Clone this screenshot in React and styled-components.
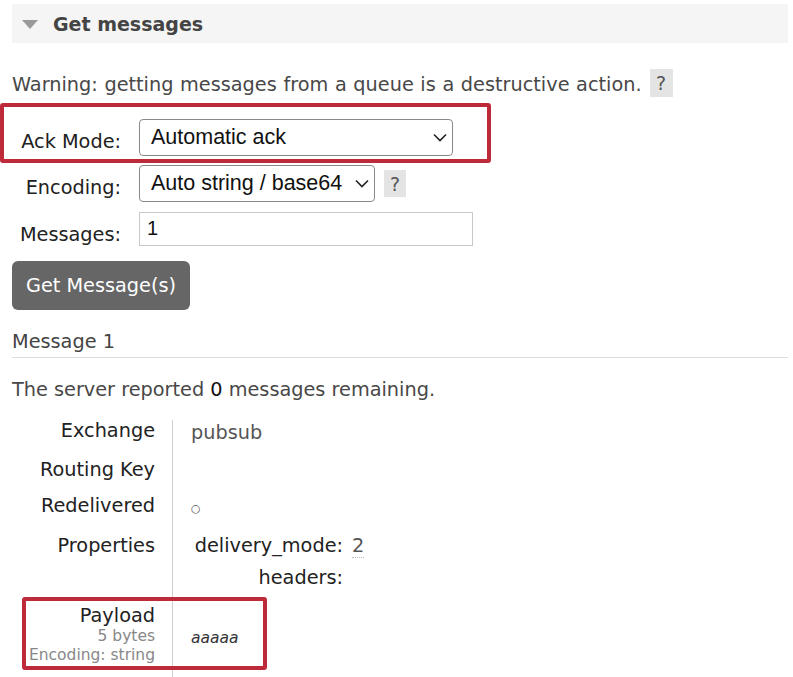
import React from "react";
import styled, { createGlobalStyle } from "styled-components";

const Global = createGlobalStyle`
  html, body { margin: 0; padding: 0; background: #fff; }
  body { font-family: "DejaVu Sans", Verdana, sans-serif; color: #444; }
`;

const Page = styled.div`
  position: relative;
  width: 793px;
  height: 677px;
  overflow: hidden;
  box-sizing: border-box;
  padding: 4px 5px 0 12px;
`;

const SectionHeader = styled.div`
  height: 39px;
  background: #f5f5f5;
  display: flex;
  align-items: center;
  padding-left: 10px;
  gap: 15px;
`;

const Triangle = styled.span`
  width: 0;
  height: 0;
  border-left: 8px solid transparent;
  border-right: 8px solid transparent;
  border-top: 9px solid #9a9a9a;
  margin-top: 1px;
`;

const Title = styled.h2`
  margin: 0;
  font-size: 19px;
  font-weight: bold;
  color: #444;
`;

const Warning = styled.div`
  margin-top: 26px;
  display: flex;
  align-items: center;
  font-size: 19.3px;
  word-spacing: 0.5px;
  color: #484848;
  height: 28px;
`;

const WarningText = styled.span`
  padding-top: 3px;
`;

const Help = styled.span`
  display: inline-flex;
  align-items: center;
  justify-content: center;
  flex: none;
  width: ${(p) => p.$w || 23}px;
  height: ${(p) => p.$h || 28}px;
  margin-left: ${(p) => p.$ml || 8}px;
  margin-top: ${(p) => p.$mt || 0}px;
  background: #e4e4e4;
  color: #555;
  font-size: 19px;
`;

const Form = styled.div`
  margin-top: 22px;
  display: flex;
  flex-direction: column;
`;

const FormRow = styled.div`
  display: flex;
  align-items: flex-start;
  margin-bottom: ${(p) => p.$mb || 0}px;
`;

const FormLabel = styled.label`
  width: 109px;
  text-align: right;
  padding-top: 12px;
  line-height: 22px;
  font-size: 19.3px;
  color: #222;
  margin-right: 18px;
  white-space: nowrap;
`;

const SelectWrap = styled.div`
  position: relative;
  display: inline-block;
`;

const Select = styled.select`
  appearance: none;
  -webkit-appearance: none;
  box-sizing: border-box;
  width: ${(p) => p.$w}px;
  height: 37px;
  border: 1px solid #8a8a8a;
  border-radius: 4px;
  background: #fff;
  padding: 0 0 2px 11px;
  font-family: "Liberation Sans", Arial, sans-serif;
  font-size: 21.5px;
  color: #111;
  outline: none;
`;

const Chevron = styled.svg`
  position: absolute;
  right: 6px;
  top: 14px;
  pointer-events: none;
`;

const Input = styled.input`
  box-sizing: border-box;
  width: 334px;
  height: 34px;
  border: 1px solid #c8c8c8;
  border-radius: 0;
  padding: 0 0 2px 7px;
  font-family: "Liberation Sans", Arial, sans-serif;
  font-size: 20px;
  color: #111;
  outline: none;
`;

const Button = styled.button`
  margin-top: 15px;
  align-self: flex-start;
  width: 178px;
  height: 49px;
  border: none;
  border-radius: 6px;
  background: #666;
  color: #fff;
  font-family: "DejaVu Sans", Verdana, sans-serif;
  font-size: 19.3px;
  padding: 0;
`;

const SubHeading = styled.h3`
  margin: 21px 0 0;
  font-weight: normal;
  font-size: 19.3px;
  line-height: 22px;
  color: #444;
  padding-bottom: 4px;
  border-bottom: 1px solid #ddd;
`;

const Para = styled.p`
  margin: 21px 0 0;
  font-size: 19.3px;
  line-height: 22px;
  color: #484848;
`;

const Strong = styled.span`
  color: #111;
`;

const Table = styled.div`
  margin-top: 19px;
  display: flex;
  flex-direction: column;
`;

const TRow = styled.div`
  display: flex;
  align-items: stretch;
  height: ${(p) => p.$h}px;
  flex: none;
`;

const TLabel = styled.div`
  width: 143px;
  flex: none;
  padding-right: 17px;
  text-align: right;
  font-size: 19.3px;
  line-height: 22px;
  color: #222;
  border-right: 1px solid #cfcfcf;
  white-space: nowrap;
`;

const SubInfo = styled.div`
  font-size: 15.5px;
  line-height: 19px;
  color: #888;
`;

const TValue = styled.div`
  padding-left: ${(p) => p.$pl || 18}px;
  padding-top: ${(p) => p.$pt || 0}px;
  font-size: 19.3px;
  line-height: 22px;
  color: #555;
`;

const Circle = styled.span`
  font-size: 11px;
  color: #555;
`;

const Props = styled.div`
  display: grid;
  grid-template-columns: 149px auto;
  column-gap: 9px;
  row-gap: 10px;
`;

const PropKey = styled.div`
  text-align: right;
  color: #222;
  white-space: nowrap;
`;

const PropVal = styled.div`
  color: #555;
`;

const Abbr = styled.span`
  border-bottom: 1px dotted #bbb;
`;

const Payload = styled.span`
  font-style: italic;
  font-size: 15.5px;
  color: #333;
`;

const Highlight = styled.div`
  position: absolute;
  left: ${(p) => p.$x}px;
  top: ${(p) => p.$y}px;
  width: ${(p) => p.$w}px;
  height: ${(p) => p.$h}px;
  box-sizing: border-box;
  border: 4px solid #bf2a3b;
  border-radius: 3px;
  pointer-events: none;
`;

const ChevronIcon = () => (
  <Chevron width="14" height="9" viewBox="0 0 14 9">
    <path d="M1 1.5 L7 7.5 L13 1.5" fill="none" stroke="#222" strokeWidth="1.6" />
  </Chevron>
);

export default function App() {
  return (
    <>
      <Global />
      <Page>
        <SectionHeader>
          <Triangle />
          <Title>Get messages</Title>
        </SectionHeader>

        <Warning>
          <WarningText>Warning: getting messages from a queue is a destructive action.</WarningText>
          <Help>?</Help>
        </Warning>

        <Form>
          <FormRow $mb={9}>
            <FormLabel>Ack Mode:</FormLabel>
            <SelectWrap>
              <Select $w={314} defaultValue="auto">
                <option value="auto">Automatic ack</option>
              </Select>
              <ChevronIcon />
            </SelectWrap>
          </FormRow>
          <FormRow $mb={10}>
            <FormLabel>Encoding:</FormLabel>
            <SelectWrap>
              <Select $w={236} defaultValue="auto">
                <option value="auto">Auto string / base64</option>
              </Select>
              <ChevronIcon />
            </SelectWrap>
            <Help $ml={9} $mt={5} $w={22} $h={27}>?</Help>
          </FormRow>
          <FormRow>
            <FormLabel>Messages:</FormLabel>
            <Input defaultValue="1" />
          </FormRow>
          <Button>Get Message(s)</Button>
        </Form>

        <SubHeading>Message 1</SubHeading>
        <Para>
          The server reported <Strong>0</Strong> messages remaining.
        </Para>

        <Table>
          <TRow $h={39}>
            <TLabel>Exchange</TLabel>
            <TValue $pt={2}>pubsub</TValue>
          </TRow>
          <TRow $h={36}>
            <TLabel>Routing Key</TLabel>
            <TValue />
          </TRow>
          <TRow $h={40}>
            <TLabel>Redelivered</TLabel>
            <TValue>
              <Circle>○</Circle>
            </TValue>
          </TRow>
          <TRow $h={70}>
            <TLabel>Properties</TLabel>
            <TValue $pl={21}>
              <Props>
                <PropKey>delivery_mode:</PropKey>
                <PropVal>
                  <Abbr>2</Abbr>
                </PropVal>
                <PropKey>headers:</PropKey>
                <PropVal />
              </Props>
            </TValue>
          </TRow>
          <TRow $h={90}>
            <TLabel>
              Payload
              <SubInfo>5 bytes</SubInfo>
              <SubInfo>Encoding: string</SubInfo>
            </TLabel>
            <TValue $pt={21}>
              <Payload>aaaaa</Payload>
            </TValue>
          </TRow>
        </Table>

        <Highlight $x={0} $y={103} $w={491} $h={60} />
        <Highlight $x={22} $y={597} $w={245} $h={73} />
      </Page>
    </>
  );
}
